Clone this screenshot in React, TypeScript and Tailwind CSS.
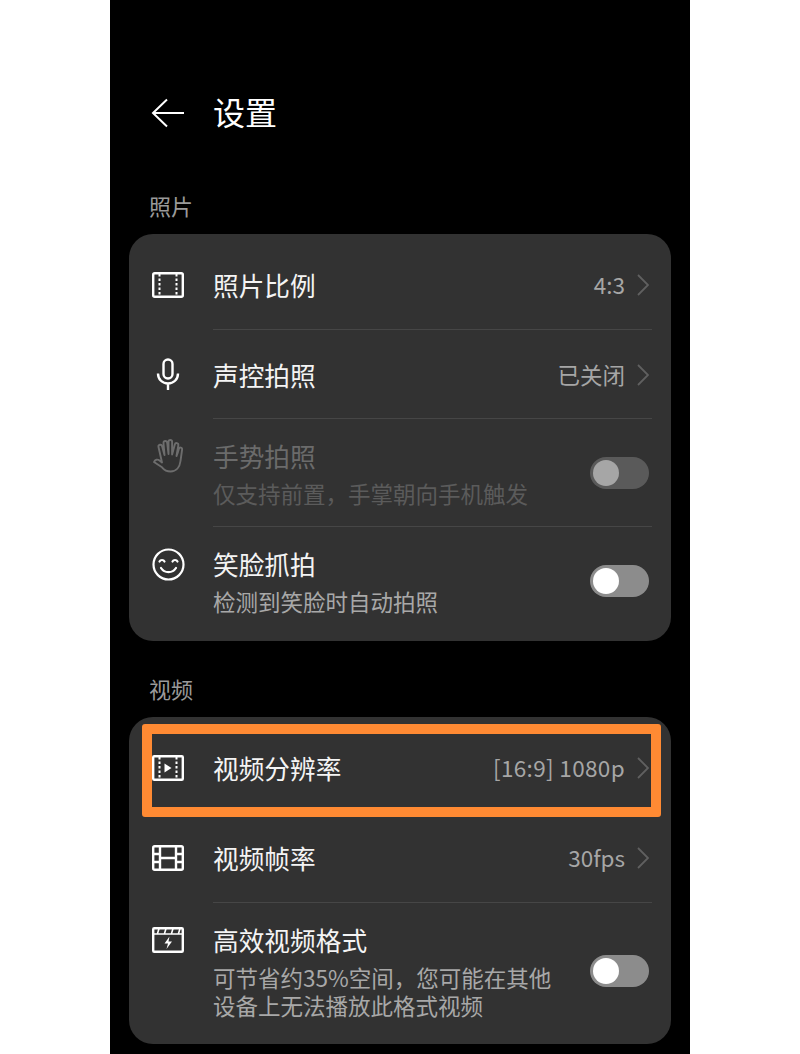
import React from 'react'

const cjk = "font-['Noto_Sans_CJK_SC','Noto_Sans',sans-serif]"

const Chevron = () => (
  <svg width="12" height="22" viewBox="0 0 12 22" fill="none" className="ml-[12px] shrink-0">
    <path d="M1 1l10 10L1 21" stroke="#606060" strokeWidth="1.800" />
  </svg>
)

const Toggle = ({ dim }: { dim?: boolean }) => (
  <div className={`w-[59px] h-[32px] rounded-full p-[3px] shrink-0 ${dim ? 'bg-[#5a5a5a]' : 'bg-[#8c8c8c]'}`}>
    <div className={`w-[26px] h-[26px] rounded-full ${dim ? 'bg-[#a6a6a6]' : 'bg-white'}`} />
  </div>
)

const IconBack = () => (
  <svg width="34" height="30" viewBox="0 0 34 30" fill="none" stroke="white" strokeWidth="2">
    <path d="M16 1.500L2 15l14 13.500M2 15h31" />
  </svg>
)

const IconPhoto = () => (
  <svg width="32" height="26" viewBox="0 0 32 26" fill="none" stroke="white">
    <rect x="1.200" y="1.200" width="29.600" height="23.600" rx="1.500" strokeWidth="2.400" />
    <path d="M7.500 2v22M24.500 2v22" strokeWidth="2" strokeDasharray="2.500 2" />
  </svg>
)

const IconMic = () => (
  <svg width="24" height="33" viewBox="0 0 24 33" fill="none" stroke="white" strokeWidth="2.400">
    <rect x="7.500" y="1.500" width="9" height="19" rx="4.500" />
    <path d="M2 15.500c0 6 4.500 10 10 10s10-4 10-10M12 25.500v6.500" />
  </svg>
)

const IconHand = () => (
  <svg width="32" height="34" viewBox="0 0 32 34" fill="none" stroke="#6d6d6d" strokeWidth="1.900" strokeLinecap="round" strokeLinejoin="round">
    <path d="M2 23c1-2.500 3.500-3 5.500-1.500l2.500 2L6.500 8c-.5-2.400 3-3.200 3.600-.8L12.500 16 11.500 4c-.2-2.600 3.400-2.800 3.700-.2L16.500 15V2.800c0-2.400 3.600-2.400 3.600 0V15.500L22.800 5.500c.6-2.300 3.900-1.600 3.500.8L24.500 17c1-2.200 1.800-5 2.300-7 .5-2.200 3.600-1.800 3.300.6L28.500 22c-.7 6.500-4.500 10.500-10 10.500-4 0-6.500-1.800-8.500-4.200z" />
  </svg>
)

const IconSmile = () => (
  <svg width="33" height="33" viewBox="0 0 33 33" fill="none" stroke="white" strokeWidth="2.200" strokeLinecap="round">
    <circle cx="16.500" cy="16.500" r="15" />
    <path d="M7.500 13.500c1-2 4-2 5 0M20.500 13.500c1-2 4-2 5 0M9 20c3.500 5.500 11.500 5.500 15 0" />
  </svg>
)

const IconVideo = () => (
  <svg width="32" height="26" viewBox="0 0 32 26" fill="none" stroke="white">
    <rect x="1.200" y="1.200" width="29.600" height="23.600" rx="1" strokeWidth="2.400" />
    <path d="M7.500 2v22M24.500 2v22" strokeWidth="2" strokeDasharray="2.500 2" />
    <path d="M12.500 8.500l7 4.500-7 4.500z" fill="white" stroke="none" />
  </svg>
)

const IconFps = () => (
  <svg width="32" height="26" viewBox="0 0 32 26" fill="none" stroke="white" strokeWidth="2.400">
    <rect x="1.200" y="1.200" width="29.600" height="23.600" rx="1.500" />
    <path d="M8 1v24M24 1v24M1 9h7M1 17h7M24 9h7M24 17h7M8 13h16" />
  </svg>
)

const IconHevc = () => (
  <svg width="32" height="26" viewBox="0 0 32 26" fill="none" stroke="white" strokeWidth="2.400">
    <rect x="1.200" y="1.200" width="29.600" height="23.600" rx="1" />
    <path d="M1 7h30M7 1.500L5.500 6.500M14 1.500l-1.500 5M21 1.500l-1.500 5M28 1.500l-1.500 5" strokeWidth="1.600" />
    <path d="M17.500 9.500L12.500 16.500h3.500l-1.500 5.500 5.500-7.500h-3.500z" fill="white" stroke="none" />
  </svg>
)

interface RowProps {
  icon: React.ReactNode
  title: string
  sub?: string[]
  value?: string
  wideValue?: boolean
  toggle?: boolean
  dim?: boolean
  rowClass: string
  divider?: boolean
}

const Row = ({ icon, title, sub, value, wideValue, toggle, dim, rowClass, divider = true }: RowProps) => (
  <div className={`flex mr-[19px] relative ${rowClass}`}>
    {/* 图标跟标题对齐，副标题那部分留空 */}
    <div className="w-[84px] shrink-0 flex flex-col justify-center pl-[6px] pr-[12px]">
      <div className="h-[34px] flex items-center justify-center">{icon}</div>
      {sub && <div style={{ height: 6 + sub.length * 28 }} />}
    </div>
    <div className="flex-1 flex items-center pr-[3px] min-w-0">
      <div className="flex-1 min-w-0">
        <div className={`text-[25.700px] leading-[34px] ${dim ? 'text-[#6b6b6b]' : 'text-[#f4f4f4]'}`}>{title}</div>
        {sub && (
          <div className={`mt-[6px] text-[22.500px] leading-[28px] ${dim ? 'text-[#5b5b5b]' : 'text-[#a8a8a8]'}`}>
            {sub.map((line, i) => (
              <React.Fragment key={line}>
                {i > 0 && <br />}
                {line}
              </React.Fragment>
            ))}
          </div>
        )}
      </div>
      {value && (
        <div className={`flex items-center text-[22.500px] text-[#a6a6a6] whitespace-nowrap ${wideValue ? 'tracking-[0.35px]' : ''}`}>
          {value}
          <Chevron />
        </div>
      )}
      {toggle && <Toggle dim={dim} />}
    </div>
    {divider && <div className="absolute left-[84px] right-0 bottom-0 h-px bg-[#464646]" />}
  </div>
)

export default function App() {
  return (
    <div className={`w-[800px] h-[1054px] overflow-hidden bg-white ${cjk}`}>
      <div className="relative w-[580px] h-full ml-[110px] bg-black px-[19px]">
        {/* 标题栏 */}
        <div className="h-[190px] pt-[83px]">
          <div className="flex items-center h-[60px] pl-[22px]">
            <IconBack />
            <span className="ml-[28px] mb-[4px] text-[32px] text-white">设置</span>
          </div>
        </div>

        <div className="h-[44px] pl-[20px] text-[22px] leading-[30px] text-[#9a9a9a]">照片</div>

        <div className="bg-[#323232] rounded-[24px] h-[407px]">
          <Row icon={<IconPhoto />} title="照片比例" value="4:3" rowClass="h-[96px] pt-[5px]" />
          <Row icon={<IconMic />} title="声控拍照" value="已关闭" rowClass="h-[89px]" />
          <Row icon={<IconHand />} title="手势拍照" sub={['仅支持前置，手掌朝向手机触发']} toggle dim rowClass="h-[108px]" />
          <Row icon={<IconSmile />} title="笑脸抓拍" sub={['检测到笑脸时自动拍照']} toggle rowClass="h-[114px] pb-[6px]" divider={false} />
        </div>

        <div className="mt-[33px] h-[43px] pl-[20px] text-[22px] leading-[28px] text-[#9a9a9a]">视频</div>

        <div className="bg-[#323232] rounded-[24px] h-[327px]">
          <Row icon={<IconVideo />} title="视频分辨率" value="[16:9] 1080p" wideValue rowClass="h-[96px] pt-[5px]" divider={false} />
          <Row icon={<IconFps />} title="视频帧率" value="30fps" rowClass="h-[90px]" />
          <Row
            icon={<IconHevc />}
            title="高效视频格式"
            sub={['可节省约35%空间，您可能在其他', '设备上无法播放此格式视频']}
            toggle
            rowClass="h-[141px] pb-[5px]"
            divider={false}
          />
        </div>

        {/* 标注框 */}
        <div className="absolute left-[32px] top-[724px] w-[519px] h-[93px] border-[10px] border-[#ff8a33] rounded-[3px]" />
      </div>
    </div>
  )
}
